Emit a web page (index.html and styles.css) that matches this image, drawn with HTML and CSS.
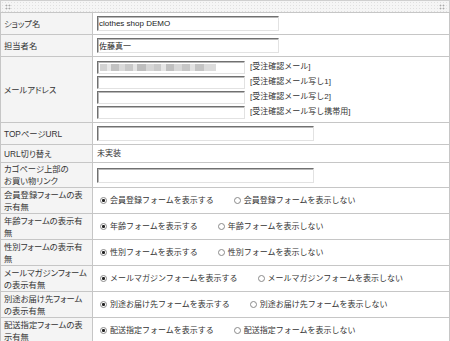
FILE: index.html
```html
<!DOCTYPE html>
<html lang="ja">
<head>
  <meta charset="UTF-8">
  <meta name="viewport" content="width=device-width, initial-scale=1.0">
  <title>ショップ基本設定</title>
  <link rel="stylesheet" href="styles.css">
</head>
<body>

  <div class="panel">
    <!-- Drag bar -->
    <div class="panel-bar">
      <span class="grip"></span>
      <span class="grip"></span>
    </div>

    <table class="settings">
      <tr class="row-input">
        <th>ショップ名</th>
        <td><input type="text" class="field field-long" value="clothes shop DEMO"></td>
      </tr>
      <tr class="row-input">
        <th>担当者名</th>
        <td><input type="text" class="field field-long" value="佐藤真一"></td>
      </tr>
      <tr class="row-mail">
        <th>メールアドレス</th>
        <td>
          <div class="mail-list">
            <div class="mail-item"><input type="text" class="field field-mail blurred"><span>[受注確認メール]</span></div>
            <div class="mail-item"><input type="text" class="field field-mail"><span>[受注確認メール写し1]</span></div>
            <div class="mail-item"><input type="text" class="field field-mail"><span>[受注確認メール写し2]</span></div>
            <div class="mail-item"><input type="text" class="field field-mail"><span>[受注確認メール写し携帯用]</span></div>
          </div>
        </td>
      </tr>
      <tr class="row-input">
        <th>TOPページURL</th>
        <td><input type="text" class="field field-url"></td>
      </tr>
      <tr class="row-text">
        <th>URL切り替え</th>
        <td>未実装</td>
      </tr>
      <tr class="row-link">
        <th>カゴページ上部の<br>お買い物リンク</th>
        <td><input type="text" class="field field-url"></td>
      </tr>
      <tr class="row-pair">
        <th>会員登録フォームの表<br>示有無</th>
        <td>
          <div class="choice">
            <label><input type="radio" name="member" checked>会員登録フォームを表示する</label>
            <label><input type="radio" name="member">会員登録フォームを表示しない</label>
          </div>
        </td>
      </tr>
      <tr class="row-pair">
        <th>年齢フォームの表示有<br>無</th>
        <td>
          <div class="choice">
            <label><input type="radio" name="age" checked>年齢フォームを表示する</label>
            <label><input type="radio" name="age">年齢フォームを表示しない</label>
          </div>
        </td>
      </tr>
      <tr class="row-pair">
        <th>性別フォームの表示有<br>無</th>
        <td>
          <div class="choice">
            <label><input type="radio" name="sex" checked>性別フォームを表示する</label>
            <label><input type="radio" name="sex">性別フォームを表示しない</label>
          </div>
        </td>
      </tr>
      <tr class="row-pair">
        <th>メールマガジンフォーム<br>の表示有無</th>
        <td>
          <div class="choice">
            <label><input type="radio" name="magazine" checked>メールマガジンフォームを表示する</label>
            <label><input type="radio" name="magazine">メールマガジンフォームを表示しない</label>
          </div>
        </td>
      </tr>
      <tr class="row-pair">
        <th>別途お届け先フォーム<br>の表示有無</th>
        <td>
          <div class="choice">
            <label><input type="radio" name="delivery" checked>別途お届け先フォームを表示する</label>
            <label><input type="radio" name="delivery">別途お届け先フォームを表示しない</label>
          </div>
        </td>
      </tr>
      <tr class="row-pair">
        <th>配送指定フォームの表<br>示有無</th>
        <td>
          <div class="choice">
            <label><input type="radio" name="shipping" checked>配送指定フォームを表示する</label>
            <label><input type="radio" name="shipping">配送指定フォームを表示しない</label>
          </div>
        </td>
      </tr>
    </table>
  </div>

</body>
</html>
```

FILE: styles.css
```css
/* Basic Reset */
* {
  margin: 0;
  padding: 0;
  box-sizing: border-box;
}

body {
  font-family: "Liberation Sans", "Noto Sans CJK JP", sans-serif;
  font-size: 8px;
  color: #333;
  background-color: #fff;
}

/* Panel and drag bar */
.panel {
  width: 450px;
}

.panel-bar {
  height: 12px;
  border: 1px solid #cfcfcf;
  border-bottom: none;
  background-color: #f5f5f5;
  background-image: radial-gradient(#e0e0e0 0.6px, transparent 0.9px);
  background-size: 3px 3px;
  display: flex;
  justify-content: space-between;
  align-items: center;
  padding: 0 4px;
}

.grip {
  width: 6px;
  height: 6px;
  background-image: radial-gradient(#a8a8a8 0.8px, transparent 1.1px);
  background-size: 3px 3px;
}

/* Settings table */
.settings {
  width: 100%;
  border-collapse: collapse;
}

.settings th,
.settings td {
  border: 1px solid #c6c6c6;
  vertical-align: middle;
  text-align: left;
  font-weight: normal;
  line-height: 12px;
}

.settings th {
  width: 92px;
  padding: 0 3px;
  font-size: 8.3px;
  font-feature-settings: "palt";
  background-color: #f4f4f4;
  white-space: nowrap;
}

.settings td {
  padding: 0 4px;
  background-color: #fff;
  white-space: nowrap;
}

.row-input th, .row-input td { height: 22px; }
.row-mail th, .row-mail td { height: 66px; }
.row-text th, .row-text td { height: 18px; }
.row-link th, .row-link td { height: 25px; }
.row-pair th, .row-pair td { height: 26px; }

/* Text fields */
.field {
  display: block;
  height: 15px;
  padding: 0 1px;
  font: inherit;
  color: #222;
  background-color: #fff;
  border: 1px solid;
  border-color: #707070 #e2e2e2 #e2e2e2 #707070;
  box-shadow: inset 1px 1px 0 #b8b8b8;
  outline: none;
}

.field-long {
  width: 182px;
}

.field-url {
  width: 217px;
}

.field-mail {
  width: 148px;
  height: 13px;
}

.blurred {
  background-image: linear-gradient(90deg,
    #d2d2d2 0 7px, #e8e8e8 7px 11px, #c2c2c2 11px 19px, #dadada 19px 25px,
    #c8c8c8 25px 33px, #e4e4e4 33px 37px, #bdbdbd 37px 46px, #d6d6d6 46px 54px,
    #cacaca 54px 61px, #e6e6e6 61px 66px, #c0c0c0 66px 74px, #d8d8d8 74px 82px,
    #c6c6c6 82px 90px, #e2e2e2 90px 95px, #c4c4c4 95px 104px, #dcdcdc 104px 116px);
  background-size: 116px 7px;
  background-position: 2px center;
  background-repeat: no-repeat;
}

/* Mail address list */
.mail-list {
  display: flex;
  flex-direction: column;
  gap: 2px;
}

.mail-item {
  display: flex;
  align-items: center;
  gap: 5px;
}

/* Radio choices */
.choice {
  display: flex;
  align-items: center;
}

.choice label {
  display: flex;
  align-items: center;
  margin-right: 17px;
}

.choice input {
  appearance: none;
  width: 7px;
  height: 7px;
  margin: 0 3px;
  border: 1px solid #8a8a8a;
  border-radius: 50%;
  background-color: #fff;
}

.choice input:checked {
  background-image: radial-gradient(#222 1.3px, transparent 1.7px);
}
```
